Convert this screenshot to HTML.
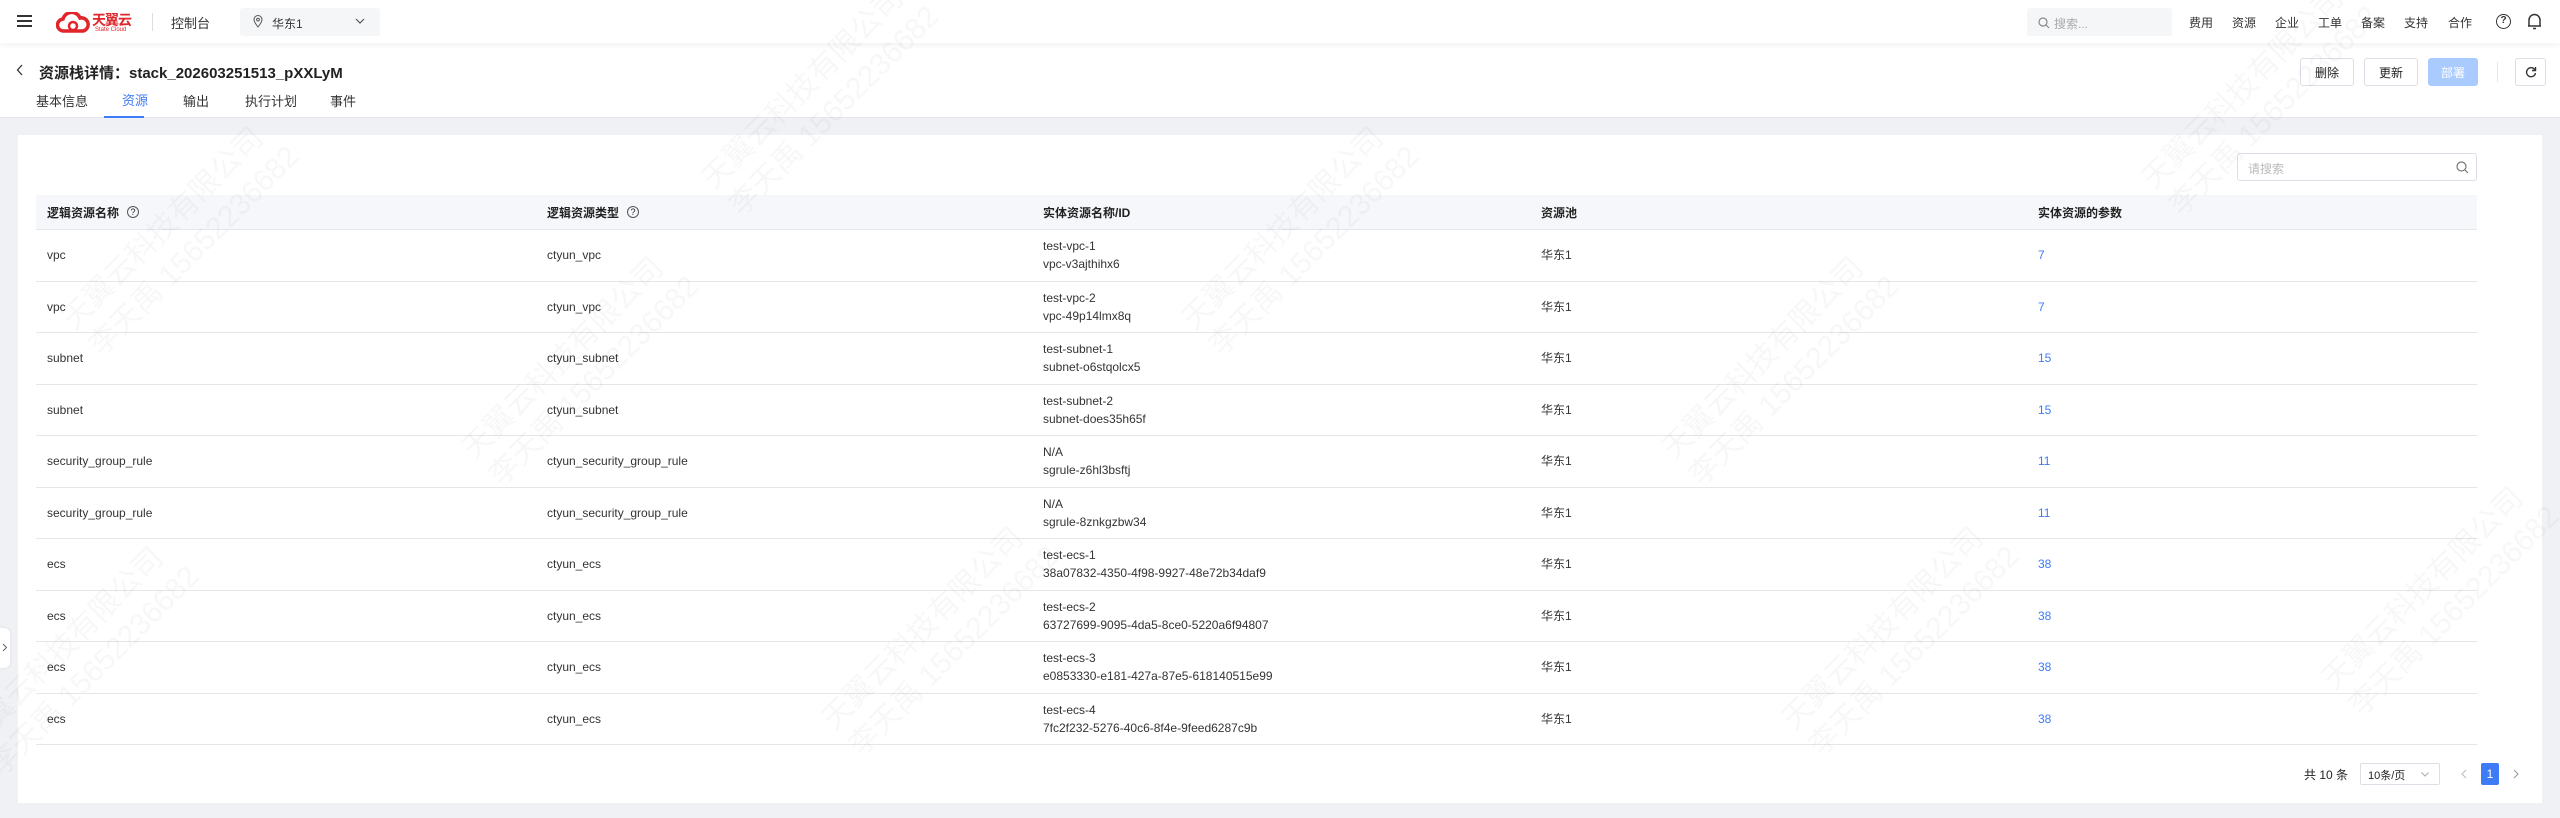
<!DOCTYPE html>
<html><head><meta charset="utf-8">
<style>
*{margin:0;padding:0;box-sizing:border-box}
body{width:2560px;height:818px;overflow:hidden;background:#f0f1f5;font-family:"Liberation Sans","Noto Sans CJK SC",sans-serif;color:#333;font-size:12px;position:relative}
.a{position:absolute}
.nav{left:0;top:0;width:2560px;height:43px;background:#fff;box-shadow:0 2px 6px rgba(0,0,0,.06);z-index:2}
.hdr{left:0;top:43px;width:2560px;height:75px;background:#fff;border-bottom:1px solid #e4e6ec}
.card{left:18px;top:135px;width:2524px;height:668px;background:#fff}
.btn{height:28px;border:1px solid #dcdfe6;border-radius:3px;background:#fff;font-size:12px;display:flex;align-items:center;justify-content:center;color:#222}
.th{top:195px;height:35px;background:#f5f7fa;left:36px;width:2441px;border-bottom:1px solid #e4e6ec}
.row{left:36px;width:2441px;height:51.5px;border-bottom:1px solid #e4e6ec}
.c{position:absolute;top:0;height:100%;display:flex;flex-direction:column;justify-content:center;line-height:18px;font-size:12px;color:#333}
.hc{position:absolute;top:0;height:100%;display:flex;align-items:center;font-weight:bold;font-size:12px;color:#222}
.q{display:inline-block;width:12px;height:12px;border:1px solid #555;border-radius:50%;font-size:9px;line-height:10px;text-align:center;margin-left:8px;font-weight:normal}
.lk{color:#3d7bf7}
.wm{position:absolute;color:rgba(0,0,0,.03);font-size:30px;transform:rotate(-45deg);white-space:nowrap;pointer-events:none;z-index:5;line-height:38px}
</style></head><body>
<div class="a nav">
 <div class="a" style="left:17px;top:15px;width:15px;height:2px;background:#333;box-shadow:0 5px 0 #333,0 10px 0 #333"></div>
 <svg class="a" style="left:56px;top:12px" width="34" height="22" viewBox="0 0 34 22"><path d="M8 19 A6 6 0 0 1 7 7 A9 9 0 0 1 24 6 A6.5 6.5 0 0 1 27 19 Z" fill="none" stroke="#e0262b" stroke-width="3.5"/><circle cx="17" cy="14" r="4" fill="none" stroke="#e0262b" stroke-width="2.5"/></svg>
 <div class="a" style="left:92px;top:10px;font-size:14px;font-weight:bold;color:#e0262b;letter-spacing:-1px">天翼云</div>
 <div class="a" style="left:95px;top:27px;font-size:6px;color:#e0262b">State Cloud</div>
 <div class="a" style="left:152px;top:13px;width:1px;height:18px;background:#ddd"></div>
 <div class="a" style="left:171px;top:13px;font-size:13px;color:#333">控制台</div>
 <div class="a" style="left:240px;top:8px;width:140px;height:28px;background:#f5f6f8;border-radius:3px"></div>
 <svg class="a" style="left:253px;top:15px" width="10" height="13" viewBox="0 0 10 13"><path d="M5 12 C1 7 1 5 1 4.5 A4 4 0 0 1 9 4.5 C9 5 9 7 5 12Z" fill="none" stroke="#555"/><circle cx="5" cy="4.6" r="1.4" fill="none" stroke="#555"/></svg>
 <div class="a" style="left:272px;top:15px;font-size:12px">华东1</div>
 <svg class="a" style="left:355px;top:18px" width="10" height="7"><path d="M1 1 L5 5 L9 1" fill="none" stroke="#555" stroke-width="1.2"/></svg>
 <div class="a" style="left:2027px;top:8px;width:145px;height:28px;background:#f5f6f8;border-radius:3px"></div>
 <svg class="a" style="left:2038px;top:17px" width="12" height="12"><circle cx="5" cy="5" r="4" fill="none" stroke="#888" stroke-width="1.2"/><path d="M8 8 L11 11" stroke="#888" stroke-width="1.2"/></svg>
 <div class="a" style="left:2054px;top:15px;color:#aaa">搜索...</div>
 <div class="a" style="left:2189px;top:14px;font-size:12px;word-spacing:0">费用</div>
 <div class="a" style="left:2232px;top:14px">资源</div>
 <div class="a" style="left:2275px;top:14px">企业</div>
 <div class="a" style="left:2318px;top:14px">工单</div>
 <div class="a" style="left:2361px;top:14px">备案</div>
 <div class="a" style="left:2404px;top:14px">支持</div>
 <div class="a" style="left:2448px;top:14px">合作</div>
 <div class="a" style="left:2496px;top:14px;width:15px;height:15px;border:1.5px solid #333;border-radius:50%;font-size:10px;line-height:12px;text-align:center;font-weight:bold">?</div>
 <svg class="a" style="left:2527px;top:13px" width="15" height="17" viewBox="0 0 15 17"><path d="M2 13 L2 7 A5.5 5.5 0 0 1 13 7 L13 13 Z M1 13 L14 13 M6 15.5 L9 15.5" fill="none" stroke="#333" stroke-width="1.5"/></svg>
</div>
<div class="a hdr">
 <svg class="a" style="left:16px;top:21px" width="8" height="12"><path d="M6 1 L1.5 6 L6 11" fill="none" stroke="#333" stroke-width="1.3"/></svg>
 <div class="a" style="left:39px;top:19px;font-size:15px;font-weight:bold;color:#222">资源栈详情：stack_202603251513_pXXLyM</div>
 <div class="a btn" style="left:2300px;top:15px;width:54px">删除</div>
 <div class="a btn" style="left:2364px;top:15px;width:54px">更新</div>
 <div class="a btn" style="left:2428px;top:15px;width:50px;background:#a9cbff;border-color:#a9cbff;color:#fff">部署</div>
 <div class="a" style="left:2497px;top:19px;width:1px;height:20px;background:#e4e6ec"></div>
 <div class="a btn" style="left:2515px;top:15px;width:31px"><svg width="12" height="12" viewBox="0 0 12 12"><path d="M10 4 A4.5 4.5 0 1 0 10.5 7" fill="none" stroke="#333" stroke-width="1.4"/><path d="M10.5 1 L10.5 4.5 L7 4.5" fill="none" stroke="#333" stroke-width="1.4"/></svg></div>
 <div class="a" style="left:36px;top:48px;font-size:13px">基本信息</div>
 <div class="a" style="left:122px;top:47px;font-size:13px;color:#3d7bf7">资源</div>
 <div class="a" style="left:104px;top:73px;width:40px;height:2px;background:#3d7bf7"></div>
 <div class="a" style="left:183px;top:48px;font-size:13px">输出</div>
 <div class="a" style="left:245px;top:48px;font-size:13px">执行计划</div>
 <div class="a" style="left:330px;top:48px;font-size:13px">事件</div>
</div>
<div class="a" style="left:0;top:628px;width:10px;height:40px;background:#fff;border-radius:0 6px 6px 0;box-shadow:0 0 3px rgba(0,0,0,.1)"><svg style="position:absolute;left:2px;top:15px" width="6" height="9"><path d="M1 1 L4.5 4.5 L1 8" fill="none" stroke="#666"/></svg></div>
<div class="a card"></div>
<div class="a" style="left:2237px;top:153px;width:240px;height:28px;border:1px solid #dcdfe6;border-radius:3px"><span class="a" style="left:10px;top:6px;color:#bbb">请搜索</span><svg class="a" style="left:218px;top:7px" width="13" height="13"><circle cx="5.5" cy="5.5" r="4.5" fill="none" stroke="#777" stroke-width="1.2"/><path d="M9 9 L12 12" stroke="#777" stroke-width="1.2"/></svg></div>
<div class="a th">
 <div class="hc" style="left:11px">逻辑资源名称<span class="q">?</span></div>
 <div class="hc" style="left:511px">逻辑资源类型<span class="q">?</span></div>
 <div class="hc" style="left:1007px">实体资源名称/ID</div>
 <div class="hc" style="left:1505px">资源池</div>
 <div class="hc" style="left:2002px">实体资源的参数</div>
</div>
<div class="a row" style="top:230px"><div class="c" style="left:11px">vpc</div><div class="c" style="left:511px">ctyun_vpc</div><div class="c" style="left:1007px"><div>test-vpc-1</div><div>vpc-v3ajthihx6</div></div><div class="c" style="left:1505px">华东1</div><div class="c lk" style="left:2002px">7</div></div>
<div class="a row" style="top:281.5px"><div class="c" style="left:11px">vpc</div><div class="c" style="left:511px">ctyun_vpc</div><div class="c" style="left:1007px"><div>test-vpc-2</div><div>vpc-49p14lmx8q</div></div><div class="c" style="left:1505px">华东1</div><div class="c lk" style="left:2002px">7</div></div>
<div class="a row" style="top:333px"><div class="c" style="left:11px">subnet</div><div class="c" style="left:511px">ctyun_subnet</div><div class="c" style="left:1007px"><div>test-subnet-1</div><div>subnet-o6stqolcx5</div></div><div class="c" style="left:1505px">华东1</div><div class="c lk" style="left:2002px">15</div></div>
<div class="a row" style="top:384.5px"><div class="c" style="left:11px">subnet</div><div class="c" style="left:511px">ctyun_subnet</div><div class="c" style="left:1007px"><div>test-subnet-2</div><div>subnet-does35h65f</div></div><div class="c" style="left:1505px">华东1</div><div class="c lk" style="left:2002px">15</div></div>
<div class="a row" style="top:436px"><div class="c" style="left:11px">security_group_rule</div><div class="c" style="left:511px">ctyun_security_group_rule</div><div class="c" style="left:1007px"><div>N/A</div><div>sgrule-z6hl3bsftj</div></div><div class="c" style="left:1505px">华东1</div><div class="c lk" style="left:2002px">11</div></div>
<div class="a row" style="top:487.5px"><div class="c" style="left:11px">security_group_rule</div><div class="c" style="left:511px">ctyun_security_group_rule</div><div class="c" style="left:1007px"><div>N/A</div><div>sgrule-8znkgzbw34</div></div><div class="c" style="left:1505px">华东1</div><div class="c lk" style="left:2002px">11</div></div>
<div class="a row" style="top:539px"><div class="c" style="left:11px">ecs</div><div class="c" style="left:511px">ctyun_ecs</div><div class="c" style="left:1007px"><div>test-ecs-1</div><div>38a07832-4350-4f98-9927-48e72b34daf9</div></div><div class="c" style="left:1505px">华东1</div><div class="c lk" style="left:2002px">38</div></div>
<div class="a row" style="top:590.5px"><div class="c" style="left:11px">ecs</div><div class="c" style="left:511px">ctyun_ecs</div><div class="c" style="left:1007px"><div>test-ecs-2</div><div>63727699-9095-4da5-8ce0-5220a6f94807</div></div><div class="c" style="left:1505px">华东1</div><div class="c lk" style="left:2002px">38</div></div>
<div class="a row" style="top:642px"><div class="c" style="left:11px">ecs</div><div class="c" style="left:511px">ctyun_ecs</div><div class="c" style="left:1007px"><div>test-ecs-3</div><div>e0853330-e181-427a-87e5-618140515e99</div></div><div class="c" style="left:1505px">华东1</div><div class="c lk" style="left:2002px">38</div></div>
<div class="a row" style="top:693.5px"><div class="c" style="left:11px">ecs</div><div class="c" style="left:511px">ctyun_ecs</div><div class="c" style="left:1007px"><div>test-ecs-4</div><div>7fc2f232-5276-40c6-8f4e-9feed6287c9b</div></div><div class="c" style="left:1505px">华东1</div><div class="c lk" style="left:2002px">38</div></div>
<div class="a" style="left:2304px;top:766px;font-size:12px;color:#222">共 10 条</div>
<div class="a" style="left:2360px;top:763px;width:80px;height:22px;border:1px solid #dcdfe6;border-radius:2px"><span class="a" style="left:7px;top:3px;font-size:11px;color:#222">10条/页</span><svg class="a" style="left:60px;top:8px" width="8" height="5"><path d="M0.5 0.5 L4 4 L7.5 0.5" fill="none" stroke="#aaa"/></svg></div>
<svg class="a" style="left:2461px;top:769px" width="6" height="10"><path d="M5 1 L1 5 L5 9" fill="none" stroke="#bbb"/></svg>
<div class="a" style="left:2481px;top:763px;width:18px;height:22px;background:#3d7bf7;border-radius:2px;color:#fff;font-size:12px;text-align:center;line-height:22px">1</div>
<svg class="a" style="left:2513px;top:769px" width="6" height="10"><path d="M1 1 L5 5 L1 9" fill="none" stroke="#999"/></svg>

<div class="wm" style="left:40px;top:200px">天翼云科技有限公司<br>李天禹 15652236682</div>
<div class="wm" style="left:440px;top:330px">天翼云科技有限公司<br>李天禹 15652236682</div>
<div class="wm" style="left:-60px;top:620px">天翼云科技有限公司<br>李天禹 15652236682</div>
<div class="wm" style="left:680px;top:60px">天翼云科技有限公司<br>李天禹 15652236682</div>
<div class="wm" style="left:1160px;top:200px">天翼云科技有限公司<br>李天禹 15652236682</div>
<div class="wm" style="left:1640px;top:330px">天翼云科技有限公司<br>李天禹 15652236682</div>
<div class="wm" style="left:2120px;top:60px">天翼云科技有限公司<br>李天禹 15652236682</div>
<div class="wm" style="left:2300px;top:560px">天翼云科技有限公司<br>李天禹 15652236682</div>
<div class="wm" style="left:800px;top:600px">天翼云科技有限公司<br>李天禹 15652236682</div>
<div class="wm" style="left:1760px;top:600px">天翼云科技有限公司<br>李天禹 15652236682</div>
</body></html>
